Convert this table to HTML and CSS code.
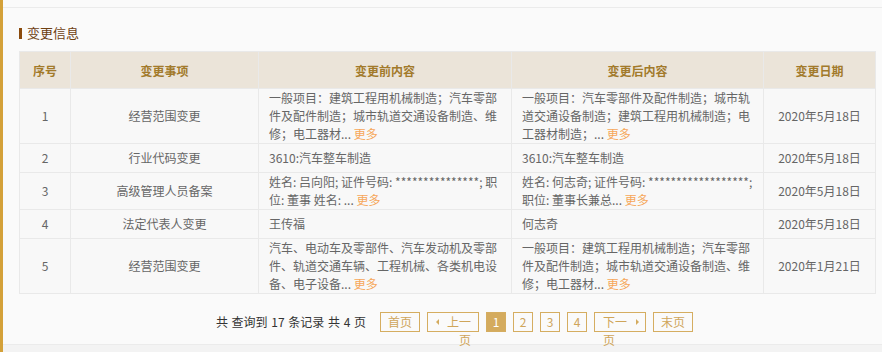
FILE: index.html
```html
<!DOCTYPE html>
<html lang="zh-CN">
<head>
<meta charset="utf-8">
<title>变更信息</title>
<link rel="stylesheet" href="styles.css">
</head>
<body>
<div class="page">
  <div class="top"></div>
  <section class="panel">
    <h3 class="title"><span class="bar"></span>变更信息</h3>
    <table class="tbl">
      <colgroup>
        <col class="c1"><col class="c2"><col class="c3"><col class="c4"><col class="c5">
      </colgroup>
      <thead>
        <tr><th>序号</th><th>变更事项</th><th>变更前内容</th><th>变更后内容</th><th>变更日期</th></tr>
      </thead>
      <tbody>
        <tr>
          <td class="ctr">1</td>
          <td class="ctr">经营范围变更</td>
          <td>一般项目：建筑工程用机械制造；汽车零部件及配件制造；城市轨道交通设备制造、维修；电工器材... <a class="more">更多</a></td>
          <td>一般项目：汽车零部件及配件制造；城市轨道交通设备制造；建筑工程用机械制造；电工器材制造；... <a class="more">更多</a></td>
          <td class="ctr">2020年5月18日</td>
        </tr>
        <tr>
          <td class="ctr">2</td>
          <td class="ctr">行业代码变更</td>
          <td>3610:汽车整车制造</td>
          <td>3610:汽车整车制造</td>
          <td class="ctr">2020年5月18日</td>
        </tr>
        <tr>
          <td class="ctr">3</td>
          <td class="ctr">高级管理人员备案</td>
          <td>姓名: 吕向阳; 证件号码: ***************; 职位: 董事 姓名: ... <a class="more">更多</a></td>
          <td>姓名: 何志奇; 证件号码: ******************; 职位: 董事长兼总... <a class="more">更多</a></td>
          <td class="ctr">2020年5月18日</td>
        </tr>
        <tr>
          <td class="ctr">4</td>
          <td class="ctr">法定代表人变更</td>
          <td>王传福</td>
          <td>何志奇</td>
          <td class="ctr">2020年5月18日</td>
        </tr>
        <tr>
          <td class="ctr">5</td>
          <td class="ctr">经营范围变更</td>
          <td>汽车、电动车及零部件、汽车发动机及零部件、轨道交通车辆、工程机械、各类机电设备、电子设备... <a class="more">更多</a></td>
          <td>一般项目：建筑工程用机械制造；汽车零部件及配件制造；城市轨道交通设备制造、维修；电工器材... <a class="more">更多</a></td>
          <td class="ctr">2020年1月21日</td>
        </tr>
      </tbody>
    </table>
    <div class="pager">
      <span class="info">共 查询到 17 条记录 共 4 页</span>
      <a class="pg">首页</a>
      <a class="pg prev">上一页</a>
      <a class="pg num active">1</a>
      <a class="pg num">2</a>
      <a class="pg num">3</a>
      <a class="pg num">4</a>
      <a class="pg next">下一页</a>
      <a class="pg">末页</a>
    </div>
  </section>
</div>
</body>
</html>
```
FILE: styles.css
```css
html, body {
  margin: 0;
  padding: 0;
}
body {
  font-family: "Noto Sans CJK SC", "Microsoft YaHei", "Liberation Sans", sans-serif;
  font-size: 12px;
  color: #666;
  background: #f3f3f3;
}
.page {
  height: 352px;
  box-sizing: border-box;
  border-left: 3px solid #d4a139;
  background: #f3f3f3;
  overflow: hidden;
}
.top {
  height: 7px;
  background: #fafafa;
}
.panel {
  box-sizing: border-box;
  height: 338px;
  background: #fafafa;
  border-top: 1px solid #ebebeb;
  border-bottom: 1px solid #ebebeb;
  padding: 15px 4px 0 16px;
}
.title {
  display: flex;
  align-items: center;
  height: 20px;
  margin: 0 0 8px;
  font-size: 13px;
  font-weight: normal;
  line-height: 20px;
  color: #6e4012;
}
.bar {
  width: 3px;
  height: 11px;
  background: #8a4a0c;
  margin-right: 5px;
}
.tbl {
  width: 857px;
  table-layout: fixed;
  border-collapse: collapse;
  background: #f8f8f8;
}
.c1 { width: 51px; }
.c2 { width: 188px; }
.c3 { width: 253px; }
.c4 { width: 252px; }
.c5 { width: 112px; }
.tbl th, .tbl td {
  border: 1px solid #e9e9e9;
}
.tbl th {
  height: 36px;
  padding: 0;
  background: #ebe4d9;
  color: #a27a2b;
  font-weight: bold;
  font-size: 12px;
  text-align: center;
}
.tbl td {
  height: 28px;
  padding: 0 10px;
  line-height: 18px;
  vertical-align: middle;
  color: #666;
}
.tbl td.ctr {
  text-align: center;
}
.more {
  color: #f6a75a;
}
.pager {
  display: flex;
  justify-content: center;
  align-items: flex-start;
  margin-top: 18px;
  padding-left: 12px;
}
.info {
  flex: none;
  color: #333;
  line-height: 20px;
  word-spacing: 1px;
  margin-right: 7px;
}
.pg {
  flex: none;
  position: relative;
  box-sizing: border-box;
  height: 20px;
  margin-left: 7px;
  padding: 0 7px;
  border: 1px solid #d5ad60;
  color: #cfa55a;
  line-height: 18px;
  text-align: center;
}
.num {
  width: 20px;
  padding: 0;
}
.active {
  background: #d4ab5e;
  color: #fff;
}
.prev {
  width: 52px;
  padding: 0 7px 0 16px;
  text-align: right;
}
.next {
  width: 52px;
  padding: 0 16px 0 8px;
  text-align: left;
}
.prev::before {
  content: "";
  position: absolute;
  left: 8px;
  top: 6px;
  border-style: solid;
  border-width: 3px 3px 3px 0;
  border-color: transparent #d4ab5e transparent transparent;
}
.next::after {
  content: "";
  position: absolute;
  right: 6px;
  top: 6px;
  border-style: solid;
  border-width: 3px 0 3px 3px;
  border-color: transparent transparent transparent #d4ab5e;
}
```
